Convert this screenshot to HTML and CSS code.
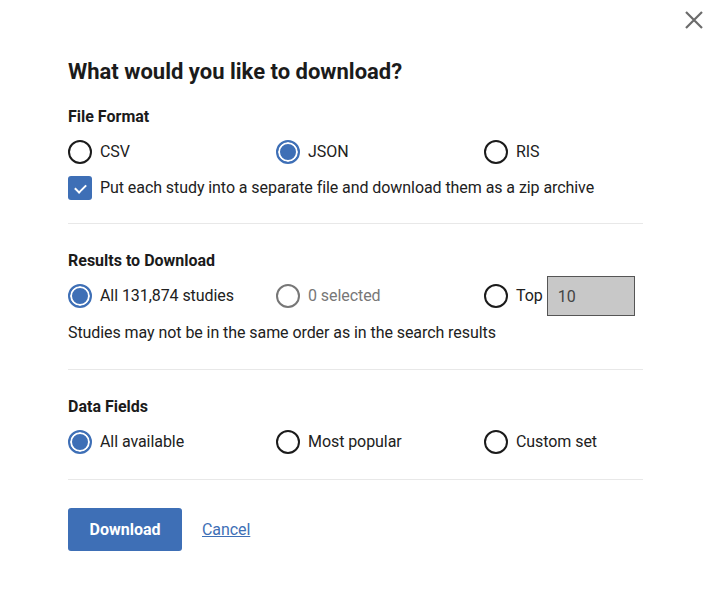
FILE: index.html
```html
<!DOCTYPE html>
<html lang="en">
<head>
<meta charset="utf-8">
<title>Download</title>
<link rel="stylesheet" href="styles.css">
</head>
<body>
<div class="modal">
  <button class="close" aria-label="Close">
    <svg width="20" height="20" viewBox="0 0 20 20"><path d="M2 2 L18 18 M18 2 L2 18" stroke="#6b6b6b" stroke-width="2.2" stroke-linecap="butt" fill="none"/></svg>
  </button>
  <div class="dialog">
    <h1 class="title">What would you like to download?</h1>

    <section class="section">
      <h2 class="heading">File Format</h2>
      <div class="options">
        <label class="opt"><input type="radio" name="fmt" class="radio"><span>CSV</span></label>
        <label class="opt"><input type="radio" name="fmt" class="radio" checked><span>JSON</span></label>
        <label class="opt"><input type="radio" name="fmt" class="radio"><span>RIS</span></label>
      </div>
      <label class="check-row"><input type="checkbox" class="check" checked><span>Put each study into a separate file and download them as a zip archive</span></label>
    </section>

    <hr class="divider first">

    <section class="section">
      <h2 class="heading">Results to Download</h2>
      <div class="options">
        <label class="opt"><input type="radio" name="res" class="radio" checked><span>All 131,874 studies</span></label>
        <label class="opt disabled"><input type="radio" name="res" class="radio" disabled><span>0 selected</span></label>
        <label class="opt top"><input type="radio" name="res" class="radio"><span>Top</span><input type="text" class="top-input" value="10" disabled></label>
      </div>
      <p class="note">Studies may not be in the same order as in the search results</p>
    </section>

    <hr class="divider">

    <section class="section">
      <h2 class="heading">Data Fields</h2>
      <div class="options">
        <label class="opt"><input type="radio" name="df" class="radio" checked><span>All available</span></label>
        <label class="opt"><input type="radio" name="df" class="radio"><span>Most popular</span></label>
        <label class="opt"><input type="radio" name="df" class="radio"><span>Custom set</span></label>
      </div>
    </section>

    <hr class="divider last">

    <div class="actions">
      <button class="btn-primary">Download</button>
      <a href="#" class="cancel">Cancel</a>
    </div>
  </div>
</div>
</body>
</html>
```

FILE: styles.css
```css
* { box-sizing: border-box; }
html, body { margin: 0; padding: 0; background: #fff; }
body {
  font-family: Roboto, "Liberation Sans", Arial, sans-serif;
  color: #212121;
  font-size: 16px;
  line-height: 24px;
  letter-spacing: -0.07px;
}
.modal {
  position: relative;
  width: 712px;
  height: 616px;
}
.close {
  position: absolute;
  top: 10px;
  right: 8px;
  width: 20px;
  height: 20px;
  padding: 0;
  border: 0;
  background: none;
}
.close svg { display: block; }
.dialog {
  padding: 60px 0 0 68px;
  width: 643px;
}
.title {
  margin: 0 0 21px;
  font-size: 22px;
  line-height: 24px;
  font-weight: 700;
  color: #1b1b1b;
  letter-spacing: 0;
}
.section { margin: 0; }
.heading {
  margin: 0 0 11px;
  font-size: 16px;
  line-height: 24px;
  font-weight: 700;
  color: #1b1b1b;
  letter-spacing: 0;
}
.options {
  display: flex;
  height: 24px;
  align-items: center;
}
.opt {
  flex: 0 0 208px;
  display: flex;
  align-items: center;
  gap: 8px;
  height: 24px;
}
.opt.top { flex: 0 0 auto; gap: 0; }
.opt.top span { margin-left: 8px; margin-right: 4px; }
.radio {
  appearance: none;
  -webkit-appearance: none;
  margin: 0;
  width: 24px;
  height: 24px;
  border: 2px solid #1b1b1b;
  border-radius: 50%;
  background: #fff;
  flex: 0 0 24px;
}
.radio:checked {
  border-color: #3e6fb6;
  background: #3e6fb6;
  box-shadow: inset 0 0 0 2px #fff;
}
.opt.disabled { color: #777; }
.opt.disabled .radio { border-color: #777; }
.top-input {
  width: 88px;
  height: 40px;
  margin: -8px 0;
  padding: 0 10px;
  border: 1px solid #555;
  background: #c8c8c8;
  font: inherit;
  color: #444;
}
.check-row {
  display: flex;
  align-items: center;
  gap: 8px;
  margin-top: 12px;
  height: 24px;
}
.check {
  appearance: none;
  -webkit-appearance: none;
  margin: 0;
  width: 24px;
  height: 24px;
  border-radius: 3px;
  background: #3e6fb6;
  flex: 0 0 24px;
  position: relative;
}
.check::after {
  content: "";
  position: absolute;
  left: 8.5px;
  top: 6px;
  width: 5px;
  height: 9px;
  border: solid #fff;
  border-width: 0 2.5px 2.5px 0;
  transform: rotate(45deg);
}
.note {
  margin: 13px 0 0;
}
.divider {
  border: 0;
  border-top: 1px solid #e8e8e8;
  margin: 24px 0 25px;
  width: 575px;
}
.divider.first { margin-top: 23px; }
.divider.last { margin: 25px 0 28px; }
.actions {
  display: flex;
  align-items: center;
  gap: 20px;
}
.btn-primary {
  width: 114px;
  height: 43px;
  border: 0;
  border-radius: 3px;
  background: #3e6fb6;
  color: #fff;
  font: inherit;
  font-weight: 700;
  letter-spacing: 0;
  padding: 0;
}
.cancel {
  color: #3e6fb6;
  text-decoration: underline;
}
```
